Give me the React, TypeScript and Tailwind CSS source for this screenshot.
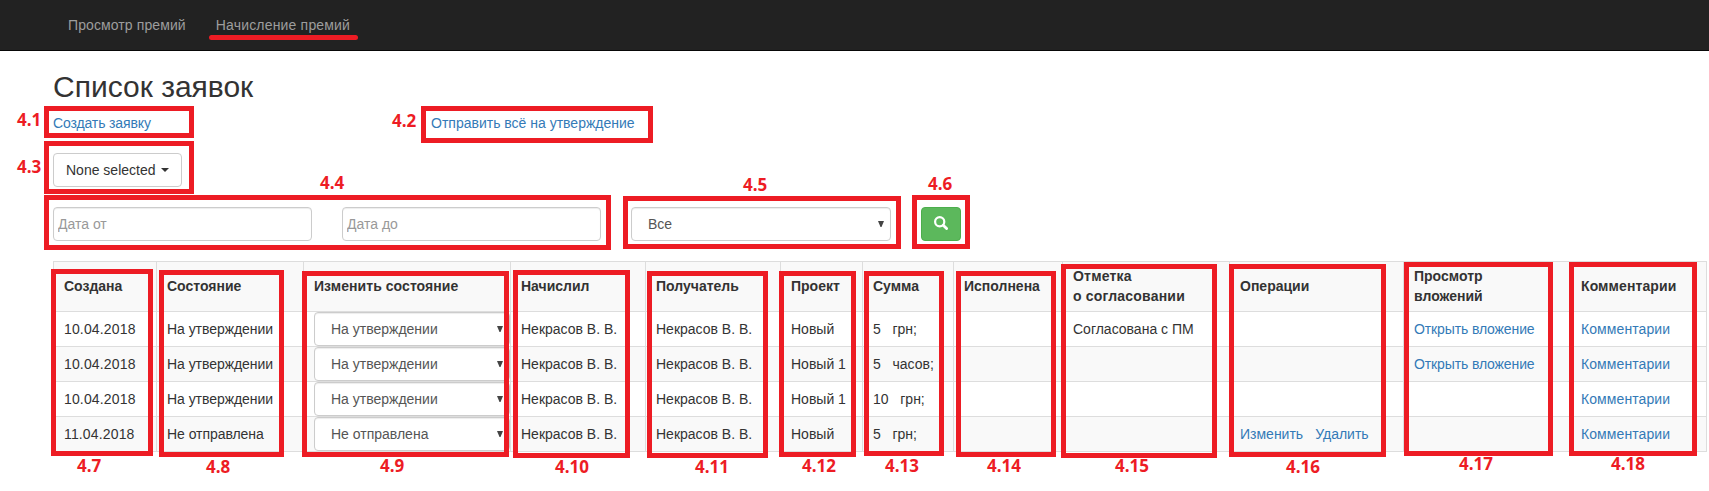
import type { ReactNode } from "react";

type Row = {
  date: string;
  state: string;
  project: string;
  sum: string;
  approval?: string;
  editable?: boolean;
  attachment?: boolean;
};

const NB = "\u00a0\u00a0\u00a0";

const rows: Row[] = [
  { date: "10.04.2018", state: "На утверждении", project: "Новый", sum: `5${NB}грн;`, approval: "Согласована с ПМ", attachment: true },
  { date: "10.04.2018", state: "На утверждении", project: "Новый 1", sum: `5${NB}часов;`, attachment: true },
  { date: "10.04.2018", state: "На утверждении", project: "Новый 1", sum: `10${NB}грн;` },
  { date: "11.04.2018", state: "Не отправлена", project: "Новый", sum: `5${NB}грн;`, editable: true },
];

const columns: { title: string[]; width: string }[] = [
  { title: ["Создана"], width: "w-[103px]" },
  { title: ["Состояние"], width: "w-[147px]" },
  { title: ["Изменить состояние"], width: "w-[207px] tracking-[0.06px]" },
  { title: ["Начислил"], width: "w-[135px]" },
  { title: ["Получатель"], width: "w-[135px]" },
  { title: ["Проект"], width: "w-[82px]" },
  { title: ["Сумма"], width: "w-[91px]" },
  { title: ["Исполнена"], width: "w-[109px]" },
  { title: ["Отметка", "о согласовании"], width: "w-[167px] tracking-[0.2px]" },
  { title: ["Операции"], width: "w-[174px]" },
  { title: ["Просмотр", "вложений"], width: "w-[167px]" },
  { title: ["Комментарии"], width: "w-[136px] tracking-[0.1px]" },
];

const frames = [
  "left-[44px] top-[106px] w-[150px] h-[32px]",
  "left-[421px] top-[106px] w-[232px] h-[37px]",
  "left-[44px] top-[141px] w-[150px] h-[53px]",
  "left-[44px] top-[195px] w-[567px] h-[55px]",
  "left-[623px] top-[196px] w-[278px] h-[53px]",
  "left-[912px] top-[195px] w-[58px] h-[54px]",
  "left-[51px] top-[269px] w-[102px] h-[187px]",
  "left-[159px] top-[270px] w-[125px] h-[187px]",
  "left-[302px] top-[271px] w-[207px] h-[186px]",
  "left-[513px] top-[270px] w-[117px] h-[188px]",
  "left-[647px] top-[271px] w-[121px] h-[187px]",
  "left-[779px] top-[271px] w-[77px] h-[186px]",
  "left-[864px] top-[271px] w-[80px] h-[185px]",
  "left-[956px] top-[271px] w-[100px] h-[186px]",
  "left-[1061px] top-[264px] w-[156px] h-[194px]",
  "left-[1229px] top-[264px] w-[157px] h-[193px]",
  "left-[1404px] top-[262px] w-[149px] h-[194px]",
  "left-[1569px] top-[262px] w-[128px] h-[194px]",
];

const labels = [
  { text: "4.1", at: "left-[17px] top-[110px]" },
  { text: "4.2", at: "left-[392px] top-[111px]" },
  { text: "4.3", at: "left-[17px] top-[157px]" },
  { text: "4.4", at: "left-[320px] top-[173px]" },
  { text: "4.5", at: "left-[743px] top-[175px]" },
  { text: "4.6", at: "left-[928px] top-[174px]" },
  { text: "4.7", at: "left-[77px] top-[456px]" },
  { text: "4.8", at: "left-[206px] top-[457px]" },
  { text: "4.9", at: "left-[380px] top-[456px]" },
  { text: "4.10", at: "left-[555px] top-[457px]" },
  { text: "4.11", at: "left-[695px] top-[457px]" },
  { text: "4.12", at: "left-[802px] top-[456px]" },
  { text: "4.13", at: "left-[885px] top-[456px]" },
  { text: "4.14", at: "left-[987px] top-[456px]" },
  { text: "4.15", at: "left-[1115px] top-[456px]" },
  { text: "4.16", at: "left-[1286px] top-[457px]" },
  { text: "4.17", at: "left-[1459px] top-[454px]" },
  { text: "4.18", at: "left-[1611px] top-[454px]" },
];

function SelectBox({ value, className }: { value: string; className: string }) {
  return (
    <div
      className={`flex h-[34px] items-center justify-between rounded border border-[#ccc] bg-white pl-4 text-[#555] shadow-[inset_0_1px_1px_rgba(0,0,0,0.075)] ${className}`}
    >
      <span>{value}</span>
      <svg width="6" height="6" viewBox="0 0 6 6" className="fill-[#444]">
        <path d="M0 0h6L3.5 6h-1z" />
      </svg>
    </div>
  );
}

function DateInput({ placeholder }: { placeholder: string }) {
  return (
    <input
      placeholder={placeholder}
      className="h-[34px] w-[259px] rounded border border-[#ccc] bg-white px-1 shadow-[inset_0_1px_1px_rgba(0,0,0,0.075)] placeholder:text-[#999]"
    />
  );
}

function Cell({ children, className = "" }: { children?: ReactNode; className?: string }) {
  return <td className={`h-[35px] border-t border-l border-[#ddd] py-0 pl-[10px] ${className}`}>{children}</td>;
}

function Link({ children }: { children: ReactNode }) {
  return (
    <a href="#" className="text-[#337ab7]">
      {children}
    </a>
  );
}

function Annotations() {
  return (
    <div className="pointer-events-none">
      <div className="absolute left-[209px] top-[35px] h-[5px] w-[149px] rounded-full bg-[#ed1c24]" />
      {frames.map((f) => (
        <div key={f} className={`absolute border-[5px] border-[#ed1c24] ${f}`} />
      ))}
      {labels.map((l) => (
        <span
          key={l.text}
          className={`absolute font-['Open_Sans',sans-serif] text-[17px] leading-5 font-bold text-[#ed1c24] ${l.at}`}
        >
          {l.text}
        </span>
      ))}
    </div>
  );
}

export default function App() {
  return (
    <div className="relative h-[491px] w-[1709px] overflow-hidden bg-white font-['Liberation_Sans',Arial,sans-serif] text-[14px] leading-5 whitespace-nowrap text-[#333]">
      <nav className="flex h-[51px] gap-[30px] border-b border-[#080808] bg-[#222] pt-[15px] pl-[68px] text-[#9d9d9d]">
        <a href="#" className="tracking-[0.1px]">Просмотр премий</a>
        <a href="#" className="tracking-[0.18px]">Начисление премий</a>
      </nav>

      <main className="pl-[53px]">
        <h2 className="pt-[19px] text-[30px] leading-[33px]">Список заявок</h2>
        <div className="flex pt-[10px]">
          <div className="w-[378px] tracking-[-0.13px]">
            <Link>Создать заявку</Link>
          </div>
          <Link>Отправить всё на утверждение</Link>
        </div>

        <button className="mt-5 flex h-[34px] w-[129px] items-center rounded border border-[#ccc] bg-white pl-3">
          None selected
          <span className="ml-[5px] border-x-4 border-t-4 border-x-transparent border-t-[#333]" />
        </button>

        <div className="mt-5 flex">
          <DateInput placeholder="Дата от" />
          <div className="ml-[30px] flex">
            <DateInput placeholder="Дата до" />
          </div>
          <SelectBox value="Все" className="ml-[30px] w-[260px] pr-[6px]" />
          <button className="ml-[30px] flex h-[34px] w-10 items-center justify-center rounded border border-[#4cae4c] bg-[#5cb85c] pb-[2px]">
            <svg width="14" height="14" viewBox="0 0 14 14" fill="none" stroke="#fff">
              <circle cx="5.7" cy="5.7" r="4.6" strokeWidth="2.2" />
              <path d="M9.2 9.2l3.4 3.4" strokeWidth="2.8" strokeLinecap="round" />
            </svg>
          </button>
        </div>

        <table className="mt-5 w-[1653px] table-fixed border-separate border-spacing-0 border-r border-b border-[#ddd] text-left">
          <thead>
            <tr className="bg-[#f9f9f9]">
              {columns.map((c) => (
                <th key={c.title[0]} className={`h-[50px] border-t border-l border-[#ddd] pt-0 pb-[2px] pl-[10px] font-bold ${c.width}`}>
                  {c.title.map((line) => (
                    <div key={line}>{line}</div>
                  ))}
                </th>
              ))}
            </tr>
          </thead>
          <tbody>
            {rows.map((r, i) => (
              <tr key={i} className="even:bg-[#f9f9f9]">
                <Cell className="tracking-[0.15px]">{r.date}</Cell>
                <Cell className="tracking-[-0.05px]">{r.state}</Cell>
                <Cell>
                  <SelectBox value={r.state} className="w-[196px] pr-[6px]" />
                </Cell>
                <Cell>Некрасов В. В.</Cell>
                <Cell>Некрасов В. В.</Cell>
                <Cell>{r.project}</Cell>
                <Cell>{r.sum}</Cell>
                <Cell />
                <Cell>{r.approval}</Cell>
                <Cell>
                  {r.editable && (
                    <span className="flex gap-3">
                      <Link>Изменить</Link>
                      <Link>Удалить</Link>
                    </span>
                  )}
                </Cell>
                <Cell className="tracking-[-0.12px]">{r.attachment && <Link>Открыть вложение</Link>}</Cell>
                <Cell className="tracking-[0.08px]">
                  <Link>Комментарии</Link>
                </Cell>
              </tr>
            ))}
          </tbody>
        </table>
      </main>

      <Annotations />
    </div>
  );
}
